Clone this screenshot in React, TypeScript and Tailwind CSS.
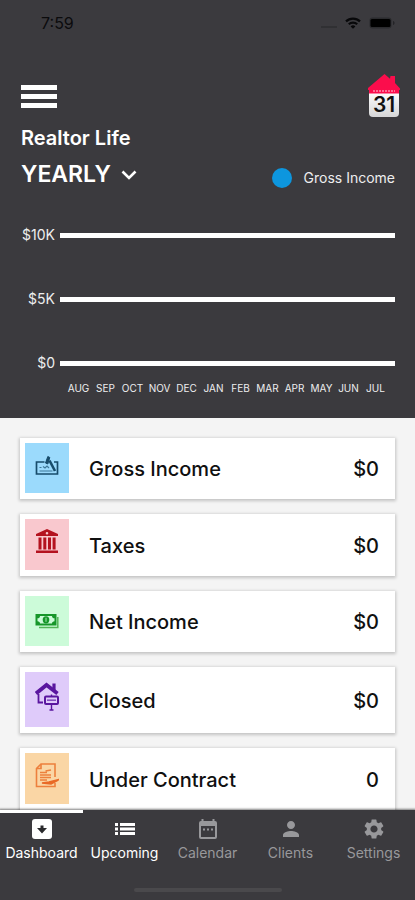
import type { ReactNode } from "react";
import { MdPerson, MdSettings } from "react-icons/md";

const months = ["AUG", "SEP", "OCT", "NOV", "DEC", "JAN", "FEB", "MAR", "APR", "MAY", "JUN", "JUL"];

function WifiIcon() {
  return (
    <svg viewBox="0 0 16 12" className="h-3 w-4" fill="none" stroke="#08080a" strokeWidth="2.2" aria-hidden="true">
      <path d="M1 4.4a10 10 0 0 1 14 0" />
      <path d="M3.8 7.3a6 6 0 0 1 8.4 0" />
      <path d="M8 11.8 5.6 9.4a3.4 3.4 0 0 1 4.8 0z" fill="#08080a" stroke="none" />
    </svg>
  );
}

function BatteryIcon() {
  return (
    <svg viewBox="0 0 26 12" className="h-3 w-[26px]" aria-hidden="true">
      <rect x="0.5" y="0.5" width="22" height="11" rx="3" fill="#2b2b2e" />
      <rect x="1.5" y="2" width="20" height="8" rx="1.5" fill="#000" />
      <path d="M24 4v4c1-.3 1.5-1 1.5-2S25 4.3 24 4z" fill="#242427" />
    </svg>
  );
}

function HouseCalendarLogo() {
  return (
    <svg viewBox="0 0 34 44" className="h-11 w-[34px]" role="img" aria-label="Realtor Life calendar, day 31">
      <defs>
        <linearGradient id="page" x1="0" y1="0" x2="0" y2="1">
          <stop offset="0" stopColor="#fff" />
          <stop offset="1" stopColor="#d6d6d8" />
        </linearGradient>
      </defs>
      <path d="M2 17h30v22a4 4 0 0 1-4 4H6a4 4 0 0 1-4-4z" fill="url(#page)" />
      <path d="M17.500 0l5.500 4.800L23.500 2H28v7l5 5.500V16h-1v3.500H2V16H1v-2z" fill="#fb0d4c" />
      <path d="M6 17h22" stroke="#ff8dab" strokeWidth="1.400" strokeDasharray="2 1" />
      <text x="17" y="38" textAnchor="middle" fontSize="21" fontWeight="600" fill="#111" fontFamily="Inter, sans-serif">31</text>
    </svg>
  );
}

function CheckIcon() {
  return (
    <svg viewBox="0 0 24 24" className="size-6" fill="none" stroke="#174c6b" strokeWidth="1.700" aria-hidden="true">
      <path d="M9.500 9H1.500v12h21V9H19" />
      <path d="M4.500 18h13M4.500 14.500h2M8 13.500l2 1.500 2-2 2 2" strokeWidth="1.200" stroke="#3d7899" />
      <path d="M10.500 10l2.300-6.500 2 1-2 6.500z" fill="#174c6b" strokeWidth="1" />
      <path d="M14.500 7.500l5.500 10.500" strokeWidth="2.600" />
    </svg>
  );
}

function BankIcon() {
  return (
    <svg viewBox="0 0 24 24" className="size-6" fill="#b4121f" aria-hidden="true">
      <path fillRule="evenodd" d="M12 0l11 5v2H1V5zm0 3a1.300 1.300 0 1 0 0 2.600A1.300 1.300 0 0 0 12 3z" />
      <path d="M3.500 8.500h3v12h-3zM8.300 8.500h3v12h-3zM13 8.500h3v12h-3zM17.600 8.500h3v12h-3zM1 21.500h22V24H1z" />
    </svg>
  );
}

function CashIcon() {
  return (
    <svg viewBox="0 -7 24 24" className="size-6" aria-hidden="true">
      <path d="M22.800 4v10.500H4" fill="none" stroke="#52b657" strokeWidth="1.500" />
      <path fillRule="evenodd" d="M.5 1h21v11.500H.5zM5 3c0 1.500-1 2.300-2.500 2.300v3C4 8.300 5 9.200 5 10.600h12c0-1.400 1-2.300 2.500-2.300v-3C18 5.300 17 4.500 17 3z" fill="#16962a" />
      <ellipse cx="11" cy="6.800" rx="3.300" ry="3.600" fill="#16962a" />
      <path d="M11 4.800v4" stroke="#8fdc9a" strokeWidth="1.200" />
    </svg>
  );
}

function HouseSignIcon() {
  return (
    <svg viewBox="0 0 24 30" className="h-[30px] w-6" fill="none" stroke="#5a169f" aria-hidden="true">
      <path d="M1 11.500L11.500 3 22.500 11.500" strokeWidth="3.800" />
      <path d="M19 1.500V8" strokeWidth="3.200" />
      <path d="M3.500 12v8.500H8" strokeWidth="1.800" />
      <rect x="10" y="14.500" width="13" height="7.500" rx="1" strokeWidth="2" />
      <path d="M12 18.200h9" strokeWidth="1.600" stroke="#8450bd" />
      <path d="M16.500 12.500v2M16.500 23v5M14.500 28h4" strokeWidth="1.400" />
    </svg>
  );
}

function ContractIcon() {
  return (
    <svg viewBox="0 0 24 26" className="h-[26px] w-6" fill="none" stroke="#ed803d" strokeWidth="1.600" aria-hidden="true">
      <path d="M20 14V1H6L1.500 5.500V23.500H20V20" />
      <path d="M6 1v4.500H1.500" />
      <path d="M5 9.500h7M5 12h11M5 14.500h11M5 17h7M10.500 8l5.500-1" strokeWidth="1.700" />
      <path d="M7 20l7-1 10-2.500-8 4.500z" fill="#e96a26" stroke="#e96a26" />
    </svg>
  );
}

function ArchiveIcon() {
  return (
    <svg viewBox="0 0 20 20" className="size-5" aria-hidden="true">
      <rect x="0" y="0" width="20" height="20" rx="3" fill="#fff" />
      <path d="M8.500 6.500h3V9H15l-5 5.500L5 9h3.500z" fill="#29292c" />
    </svg>
  );
}

function ListIcon() {
  return (
    <svg viewBox="0 0 20 20" className="size-5" fill="currentColor" aria-hidden="true">
      <path d="M0 4h3v3H0zM0 8.500h3v3H0zM0 13h3v3H0zM5 4h15v3H5zM5 8.500h15v3H5zM5 13h15v3H5z" />
    </svg>
  );
}

function CalendarIcon() {
  return (
    <svg viewBox="0 0 20 20" className="size-5" aria-hidden="true">
      <path fillRule="evenodd" d="M3.500 0h2v2h9V0h2v2H17a2 2 0 0 1 2 2v14a2 2 0 0 1-2 2H3a2 2 0 0 1-2-2V4a2 2 0 0 1 2-2h.5zM3 7v11h14V7z" fill="currentColor" />
      <path d="M5 9.500h2v2H5zM9 9.500h2v2H9zM13 9.500h2v2h-2z" fill="currentColor" />
    </svg>
  );
}

type Stat = { label: string; value: string; tile: string; icon: ReactNode };

const stats: Stat[] = [
  { label: "Gross Income", value: "$0", tile: "h-[50px] bg-[#9bdafc]", icon: <CheckIcon /> },
  { label: "Taxes", value: "$0", tile: "h-[51px] bg-[#f9c8ce]", icon: <BankIcon /> },
  { label: "Net Income", value: "$0", tile: "h-[50px] bg-[#ccfbd9]", icon: <CashIcon /> },
  { label: "Closed", value: "$0", tile: "h-[55px] bg-[#dfcbfa]", icon: <HouseSignIcon /> },
  { label: "Under Contract", value: "0", tile: "h-[51px] bg-[#fad6a5]", icon: <ContractIcon /> },
];

const tabs = [
  { label: "Dashboard", icon: <ArchiveIcon />, tone: "text-white", current: true },
  { label: "Upcoming", icon: <ListIcon />, tone: "text-white", current: false },
  { label: "Calendar", icon: <CalendarIcon />, tone: "text-[#98989b]", current: false },
  { label: "Clients", icon: <MdPerson className="size-6" />, tone: "text-[#98989b]", current: false },
  { label: "Settings", icon: <MdSettings className="size-6" />, tone: "text-[#98989b]", current: false },
];

function GridLine({ label }: { label: string }) {
  return (
    <div className="flex h-4 items-center gap-[5px]">
      <span className="w-[34px] text-right text-sm leading-4 text-[#eeeeef]">{label}</span>
      <span className="h-[5px] flex-1 bg-white" />
    </div>
  );
}

export default function App() {
  return (
    <div className="flex h-screen flex-col overflow-hidden bg-[#f4f4f4] font-['Inter','Liberation_Sans',sans-serif]">
      <header className="shrink-0 bg-[#3b3a3e] pr-5 pb-6 pl-[21px] text-white">
        <div className="flex h-[46px] items-center justify-between pl-5">
          <time className="text-base text-[#0b0b0d]">7:59</time>
          <div className="flex items-center gap-2">
            <span className="mt-2 h-0.5 w-4 bg-[#303033]" />
            <WifiIcon />
            <BatteryIcon />
          </div>
        </div>

        <div className="mt-7 -mr-1.5 flex items-center justify-between">
          <button type="button" aria-label="Open menu" className="flex w-9 flex-col gap-1">
            <span className="h-[5px] bg-white" />
            <span className="h-[5px] bg-white" />
            <span className="h-[5px] bg-white" />
          </button>
          <HouseCalendarLogo />
        </div>

        <h1 className="mt-2 text-xl leading-6 font-semibold">Realtor Life</h1>

        <div className="mt-1.5 flex items-center justify-between">
          <div className="relative">
            <select aria-label="Period" defaultValue="YEARLY" className="block h-9 appearance-none bg-transparent pr-[26px] text-[23px] leading-9 font-semibold">
              <option>YEARLY</option>
            </select>
            <svg viewBox="0 0 16 10" className="pointer-events-none absolute top-3.5 right-0 h-2.5 w-4" fill="none" stroke="#fff" strokeWidth="2.600" aria-hidden="true">
              <path d="M1.500 1.500L8 8l6.500-6.500" />
            </svg>
          </div>
          <div className="flex items-center gap-3 pt-2">
            <span className="size-5 rounded-full bg-[#0d96de]" />
            <span className="text-sm leading-5 text-[#eeeeef]">Gross Income</span>
          </div>
        </div>

        <div className="mt-[35px] flex flex-col gap-12">
          <GridLine label="$10K" />
          <GridLine label="$5K" />
          <GridLine label="$0" />
        </div>
        <ol className="mt-[11px] mr-1.5 ml-11 grid grid-cols-12">
          {months.map((m) => (
            <li key={m} className="text-center text-[10px] leading-3 text-[#eeeeef]">{m}</li>
          ))}
        </ol>
      </header>

      <main className="flex min-h-0 flex-1 flex-col gap-[15px] overflow-hidden px-5 pt-5">
        {stats.map((s) => (
          <section key={s.label} className="flex shrink-0 items-center gap-5 bg-white pt-[5px] pr-4 pb-1.5 pl-[5px] text-xl leading-6 font-medium text-[#101010] shadow-[0_1px_3px_1px_rgba(0,0,0,0.2)]">
            <div className={`flex w-11 items-start justify-center pt-2.5 ${s.tile}`}>{s.icon}</div>
            <h2 className="flex-1 pt-0.5">{s.label}</h2>
            <span className="pt-0.5">{s.value}</span>
          </section>
        ))}
      </main>

      <nav className="z-10 h-[90px] shrink-0 bg-[#3b3a3e] shadow-[0_0_2px_1px_rgba(0,0,0,0.5)]">
        <div className="grid grid-cols-5">
          {tabs.map((t) => (
            <button
              key={t.label}
              type="button"
              aria-current={t.current ? "page" : undefined}
              className={`flex flex-col items-center border-t-3 pt-1 ${t.tone} ${t.current ? "border-white" : "border-transparent"}`}
            >
              <span className="flex h-6 items-center">{t.icon}</span>
              <span className="mt-0.5 text-sm leading-5">{t.label}</span>
            </button>
          ))}
        </div>
        <div className="mx-auto mt-[25px] h-1 w-[148px] rounded-full bg-[#4a494c]" />
      </nav>
    </div>
  );
}
